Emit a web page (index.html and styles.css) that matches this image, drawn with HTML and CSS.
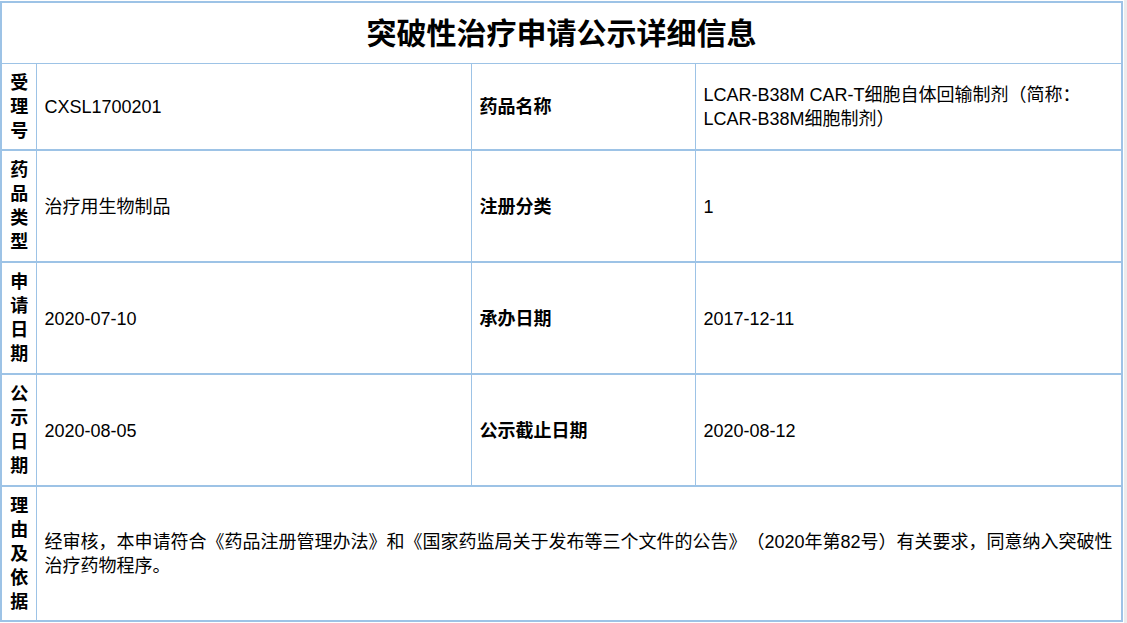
FILE: index.html
```html
<!DOCTYPE html>
<html lang="zh-CN">
<head>
<meta charset="utf-8">
<title>突破性治疗申请公示详细信息</title>
<link rel="stylesheet" href="styles.css">
</head>
<body>
<div class="page">
  <table class="info">
    <colgroup>
      <col class="c1"><col class="c2"><col class="c3"><col class="c4">
    </colgroup>
    <tr class="title-row">
      <th colspan="4" class="title">突破性治疗申请公示详细信息</th>
    </tr>
    <tr>
      <th class="side">受理号</th>
      <td>CXSL1700201</td>
      <th class="label">药品名称</th>
      <td>LCAR-B38M CAR-T细胞自体回输制剂（简称：LCAR-B38M细胞制剂）</td>
    </tr>
    <tr class="tall">
      <th class="side">药品类型</th>
      <td>治疗用生物制品</td>
      <th class="label">注册分类</th>
      <td>1</td>
    </tr>
    <tr class="tall">
      <th class="side">申请日期</th>
      <td>2020-07-10</td>
      <th class="label">承办日期</th>
      <td>2017-12-11</td>
    </tr>
    <tr class="tall">
      <th class="side">公示日期</th>
      <td>2020-08-05</td>
      <th class="label">公示截止日期</th>
      <td>2020-08-12</td>
    </tr>
    <tr>
      <th class="side">理由及依据</th>
      <td colspan="3">经审核，本申请符合《药品注册管理办法》和《国家药监局关于发布等三个文件的公告》（2020年第82号）有关要求，同意纳入突破性治疗药物程序。</td>
    </tr>
  </table>
  <div class="strip"></div>
</div>
</body>
</html>
```

FILE: styles.css
```css
html, body {
  margin: 0;
  padding: 0;
  background: #ffffff;
}
body {
  font-family: "Liberation Sans", Arial, "Noto Sans CJK SC", sans-serif;
  color: #000;
  text-spacing-trim: space-all;
}
.page {
  display: flex;
  align-items: flex-start;
  padding-top: 1px;
}
.strip {
  flex: 1;
  align-self: stretch;
  margin-top: -1px;
  margin-left: 1px;
  background: #ececec;
  min-height: 623px;
}
.info {
  width: 1123px;
  table-layout: fixed;
  border-collapse: collapse;
  border: 2px solid #9dc3e6;
  font-size: 18px;
  line-height: 24px;
}
.c1 { width: 35px; }
.c2 { width: 435px; }
.c3 { width: 224px; }
.c4 { width: auto; }
.info th, .info td {
  border: 1px solid #9dc3e6;
  border-bottom-width: 2px;
  vertical-align: middle;
  text-align: left;
  padding: 7px 8px 6px 8px;
  font-weight: normal;
}
.info .title-row th {
  border-bottom-width: 1px;
}
.info .title {
  text-align: center;
  font-size: 30px;
  font-weight: bold;
  height: 48px;
  padding: 7px 0 5px;
}
.info .side {
  font-weight: bold;
  text-align: center;
  padding: 7px 7px 6px 8px;
  word-break: break-all;
}
.info .tall .side {
  padding-bottom: 7px;
}
.info .label {
  font-weight: bold;
}
```
